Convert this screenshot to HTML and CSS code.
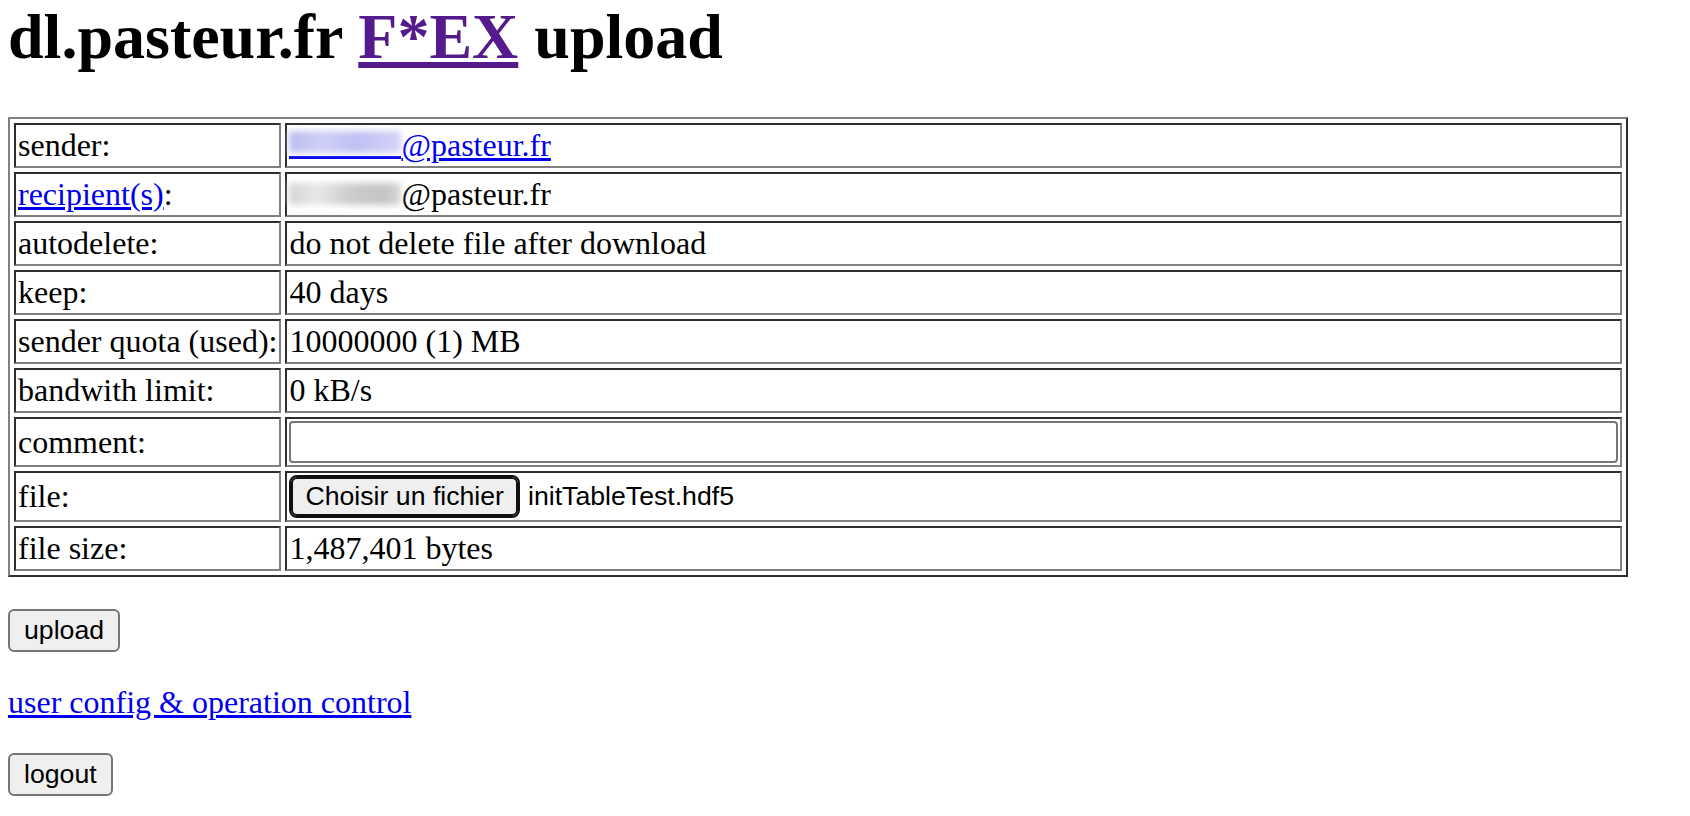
FILE: index.html
```html
<!DOCTYPE html>
<html lang="en">
<head>
    <meta charset="UTF-8">
    <title>dl.pasteur.fr F*EX upload</title>
    <link rel="stylesheet" href="styles.css">
</head>
<body>
    <h1>dl.pasteur.fr <a class="visited" href="#">F*EX</a> upload</h1>
    <form class="upload-form">
        <table class="fex-table">
            <tr>
                <td>sender:</td>
                <td><a href="#"><span class="blur blur-blue"></span>@pasteur.fr</a></td>
            </tr>
            <tr>
                <td><a href="#">recipient(s)</a>:</td>
                <td><span class="blur blur-grey"></span>@pasteur.fr</td>
            </tr>
            <tr>
                <td>autodelete:</td>
                <td>do not delete file after download</td>
            </tr>
            <tr>
                <td>keep:</td>
                <td>40 days</td>
            </tr>
            <tr>
                <td>sender quota (used):</td>
                <td>10000000 (1) MB</td>
            </tr>
            <tr>
                <td>bandwith limit:</td>
                <td>0 kB/s</td>
            </tr>
            <tr>
                <td>comment:</td>
                <td><input type="text" class="comment-input"></td>
            </tr>
            <tr>
                <td>file:</td>
                <td class="file-cell"><button type="button" class="btn btn-focus">Choisir un fichier</button><span class="file-name">initTableTest.hdf5</span></td>
            </tr>
            <tr>
                <td>file size:</td>
                <td>1,487,401 bytes</td>
            </tr>
        </table>
        <p><button type="button" class="btn">upload</button></p>
    </form>
    <p><a href="#">user config &amp; operation control</a></p>
    <p><button type="button" class="btn">logout</button></p>
</body>
</html>
```

FILE: styles.css
```css
body {
    margin: 0 8px 8px;
    font-family: "Liberation Serif", serif;
    font-size: 32px;
    color: #000;
}

a {
    color: #0000ee;
}

a.visited {
    color: #551a8b;
}

h1 {
    font-size: 64px;
    margin: 0 0 43px;
}

.fex-table {
    border-collapse: separate;
    border-spacing: 4px;
    border: 2px solid;
    border-color: #808080 #2e2e2e #2e2e2e #808080;
}

.fex-table td {
    padding: 2px;
    border: 2px solid;
    border-color: #2e2e2e #808080 #808080 #2e2e2e;
}

/* blurred-out user names */
.blur {
    position: relative;
    display: inline-block;
    width: 112px;
    height: 26px;
    vertical-align: -3px;
}

.blur::before {
    content: "";
    position: absolute;
    left: 0;
    right: 0;
    top: 1px;
    bottom: 3px;
    filter: blur(3px);
}

.blur-blue {
    border-bottom: 3px solid #0000ee;
}

.blur-blue::before {
    background: linear-gradient(100deg, #bcbcf2 0%, #cfcff8 30%, #c0c0f3 60%, #d4d4fa 100%);
}

.blur-grey::before {
    background: linear-gradient(95deg, #d4d4d4 0%, #e8e8e8 25%, #cccccc 55%, #c4c4c4 85%, #dadada 100%);
}

.comment-input {
    display: block;
    box-sizing: border-box;
    width: 1329px;
    height: 42px;
    padding: 2px 4px;
    border: 2px solid #767676;
    border-radius: 4px;
    font-size: 26.67px;
    font-family: "Liberation Sans", sans-serif;
}

.btn {
    font-family: "Liberation Sans", sans-serif;
    font-size: 26.67px;
    color: #000;
    background: #efefef;
    border: 2px solid #767676;
    border-radius: 6px;
    padding: 4px 14px;
    margin: 0;
}

.btn-focus {
    padding: 2px 12px;
    margin: 2px 0 2px 2px;
    border-color: #101010;
    outline: 2px solid #101010;
}

.file-name {
    margin-left: 10px;
    font-family: "Liberation Sans", sans-serif;
    font-size: 26.67px;
}

.upload-form p {
    margin: 32px 0;
}
```
